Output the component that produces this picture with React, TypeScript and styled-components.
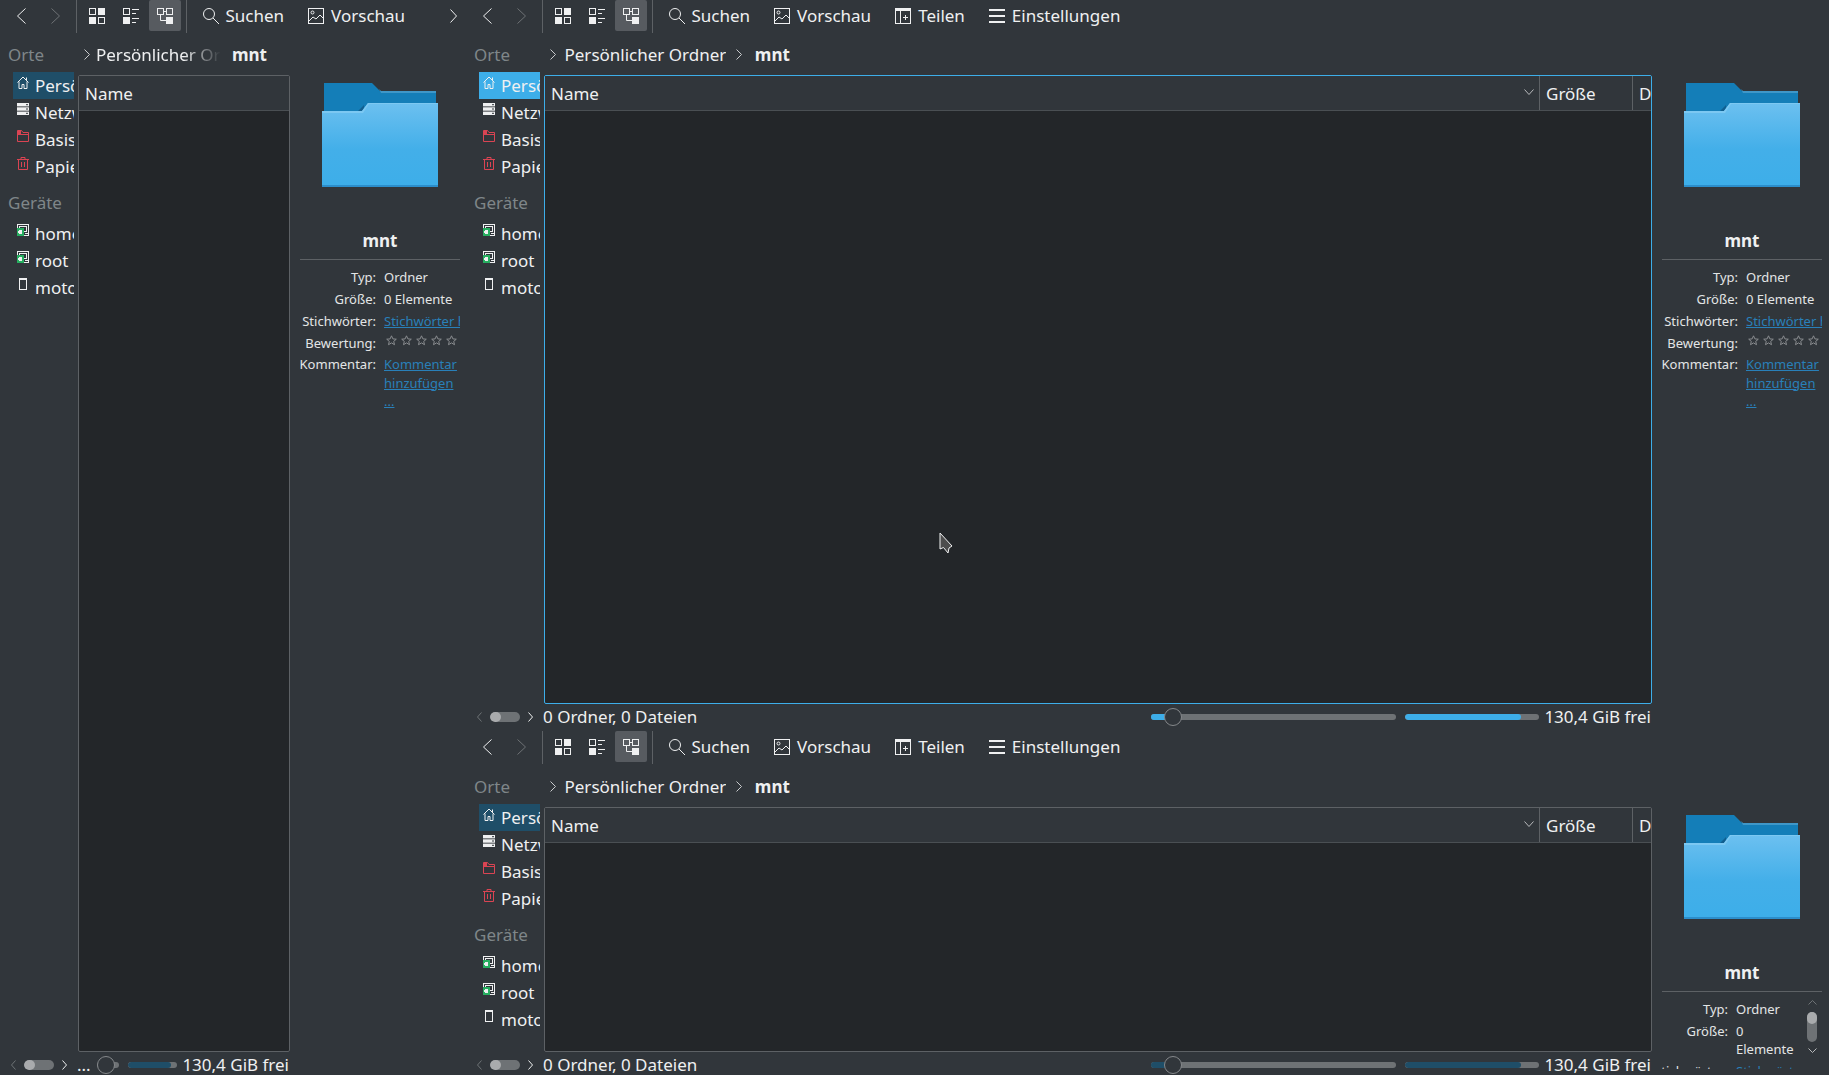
import React from 'react';
import styled, { createGlobalStyle } from 'styled-components';

const GlobalStyle = createGlobalStyle`
    html, body {
        margin: 0;
        padding: 0;
        background: #31363b;
    }
    * {
        box-sizing: border-box;
    }
`;

const Desktop = styled.div`
    width: 1829px;
    height: 1075px;
    display: grid;
    grid-template-columns: 466px 1363px;
    background: #31363b;
    color: #eff0f1;
    font-family: 'Noto Sans', sans-serif;
    font-size: 17px;
    overflow: hidden;
`;

const RightColumn = styled.div`
    display: grid;
    grid-template-rows: 731px 344px;
    min-height: 0;
`;

const PaneBox = styled.div<{ $gapBottom?: number }>`
    display: flex;
    flex-direction: column;
    min-height: 0;
    overflow: hidden;
    padding-bottom: ${p => p.$gapBottom || 0}px;
`;

// toolbar
const Toolbar = styled.div<{ $height: number }>`
    display: flex;
    align-items: flex-start;
    height: ${p => p.$height}px;
    flex: 0 0 ${p => p.$height}px;
    padding-left: 4px;
`;

const NavButton = styled.div`
    width: 34px;
    height: 31px;
    display: flex;
    align-items: center;
    justify-content: center;
    color: #eff0f1;
`;

const OverflowButton = styled(NavButton)`
    margin-left: auto;
    margin-right: -5px;
    width: 24px;
    position: relative;
    left: -6px;
`;

const ToolSeparator = styled.div`
    width: 1px;
    height: 33px;
    background: #5d6165;
    margin: 0 3px 0 4px;
`;

const ViewButton = styled.div<{ $active?: boolean }>`
    width: 32px;
    height: 31px;
    margin: 0 1px;
    display: flex;
    align-items: center;
    justify-content: center;
    border-radius: 2px;
    background: ${p => (p.$active ? '#575b60' : 'transparent')};
`;

const TextButton = styled.div`
    height: 31px;
    display: flex;
    align-items: center;
    gap: 7px;
    padding: 0 11.5px 0 12.5px;
    white-space: nowrap;
`;

// content
const Body = styled.div<{ $info: number }>`
    flex: 1;
    min-height: 0;
    display: grid;
    grid-template-columns: 1fr ${p => p.$info}px;
`;

const Left = styled.div`
    display: flex;
    flex-direction: column;
    min-width: 0;
    min-height: 0;
`;

const Upper = styled.div`
    flex: 1;
    min-height: 0;
    display: grid;
    grid-template-columns: 78px 1fr;
`;

const Places = styled.div`
    margin-top: -1px;
    overflow: hidden;
`;

const SectionLabel = styled.div`
    height: 36px;
    margin-top: 4px;
    padding: 1px 0 0 8px;
    display: flex;
    align-items: center;
    color: #7f8689;
`;

const PlaceRow = styled.div<{ $selected?: boolean; $focus?: boolean }>`
    width: 61px;
    height: 27px;
    margin-left: 13px;
    padding-left: 4px;
    display: flex;
    align-items: flex-start;
    gap: 6px;
    overflow: hidden;
    white-space: nowrap;
    line-height: 28px;
    background: ${p => (p.$selected ? (p.$focus ? '#3daee9' : '#1f4e68') : 'transparent')};

    svg {
        flex: 0 0 12px;
        margin-top: 4px;
    }
`;

const Main = styled.div`
    display: flex;
    flex-direction: column;
    min-width: 0;
    min-height: 0;
`;

const Crumbs = styled.div`
    height: 42px;
    flex: 0 0 42px;
    padding: 0 0 0 3px;
    display: flex;
    align-items: center;
    white-space: nowrap;
`;

const CrumbChevron = styled.span`
    display: flex;
    width: 11px;
    justify-content: center;
    color: #c9cbcd;
`;

const CrumbText = styled.span<{ $clip?: number }>`
    margin: 0 7px 0 ${p => (p.$clip ? '4px' : '6.5px')};
    overflow: hidden;
    ${p =>
        p.$clip
            ? `width: ${p.$clip}px;
               flex: 0 0 ${p.$clip}px;
               -webkit-mask-image: linear-gradient(to right, #000 70%, transparent 100%);
               mask-image: linear-gradient(to right, #000 70%, transparent 100%);`
            : ''}
`;

const CrumbCurrent = styled.span<{ $tight?: boolean }>`
    font-weight: 700;
    margin-left: ${p => (p.$tight ? '4px' : '10.5px')};
`;

const Frame = styled.div<{ $focus?: boolean }>`
    flex: 1;
    min-height: 0;
    display: flex;
    flex-direction: column;
    border: 1px solid ${p => (p.$focus ? '#3daee9' : '#5d6165')};
    border-radius: 2px;
    overflow: hidden;
    background: #232629;
`;

const Header = styled.div`
    height: 35px;
    flex: 0 0 35px;
    display: flex;
    background: #31363b;
    border-bottom: 1px solid #4a4f53;
    white-space: nowrap;
`;

const NameColumn = styled.div`
    flex: 1;
    min-width: 0;
    position: relative;
    display: flex;
    align-items: center;
    padding: 1px 0 0 6px;
`;

const SortMark = styled.span`
    position: absolute;
    right: 5px;
    top: 13px;
    display: flex;
    color: #b8babc;
`;

const Column = styled.div<{ $width: number }>`
    flex: 0 0 ${p => p.$width}px;
    overflow: hidden;
    display: flex;
    align-items: center;
    padding: 1px 0 0 6px;
    border-left: 1px solid #5d6165;
`;

const FrameBody = styled.div`
    flex: 1;
    position: relative;
`;

const Cursor = styled.svg`
    position: absolute;
    left: 394px;
    top: 421px;
`;

// status bar
const Status = styled.div`
    height: 23px;
    flex: 0 0 23px;
    display: flex;
    align-items: center;
    padding: 2px 1px 0 0;
    white-space: nowrap;
`;

const StatusScroll = styled.div`
    width: 77px;
    flex: 0 0 77px;
    padding-left: 11px;
    display: flex;
    align-items: center;
    gap: 8px;
    color: #eff0f1;
`;

const Pill = styled.span`
    width: 30px;
    height: 10px;
    border-radius: 5px;
    background: #6e7275;
    display: block;
    overflow: hidden;

    &::before {
        content: '';
        display: block;
        width: 11px;
        height: 10px;
        border-radius: 5px;
        background: #a9abad;
    }
`;

const StatusText = styled.div`
    flex: 1;
    min-width: 0;
`;

const Slider = styled.div<{ $width: number }>`
    flex: 0 0 ${p => p.$width}px;
    height: 6px;
    margin: 0 9px 0 8px;
    border-radius: 3px;
    background: #6e7275;
    position: relative;
`;

const SliderFill = styled.div<{ $width: number; $focus?: boolean }>`
    width: ${p => p.$width}px;
    height: 6px;
    border-radius: 3px 0 0 3px;
    background: ${p => (p.$focus ? '#3daee9' : '#1f4e68')};
`;

const SliderHandle = styled.div<{ $left: number }>`
    position: absolute;
    left: ${p => p.$left}px;
    top: -6px;
    width: 18px;
    height: 18px;
    border-radius: 50%;
    border: 1px solid #85888b;
    background: #31363b;
`;

const SpaceBar = styled.div<{ $width: number }>`
    flex: 0 0 ${p => p.$width}px;
    height: 6px;
    margin-right: 5px;
    border-radius: 3px;
    background: #6e7275;
    overflow: hidden;
`;

const SpaceFill = styled.div<{ $width: number; $focus?: boolean }>`
    width: ${p => p.$width}px;
    height: 6px;
    border-radius: 3px;
    background: ${p => (p.$focus ? '#3daee9' : '#1f4e68')};
`;

// info panel
const Info = styled.div`
    padding: 50px 6px 6px 10px;
    display: flex;
    flex-direction: column;
    min-height: 0;
    overflow: hidden;
`;

const FolderBox = styled.div`
    display: flex;
    justify-content: center;
    flex: 0 0 104px;
    width: 160px;
`;

const InfoName = styled.div`
    margin-top: 43px;
    width: 160px;
    line-height: 22px;
    text-align: center;
    font-weight: 700;
`;

const InfoRule = styled.div`
    margin-top: 7px;
    width: 160px;
    height: 1px;
    flex: 0 0 1px;
    background: #5d6165;
`;

const InfoLower = styled.div`
    margin-top: 7.5px;
    flex: 1;
    min-height: 0;
    display: flex;
    overflow: hidden;
`;

const InfoGrid = styled.div<{ $narrow?: boolean }>`
    width: ${p => (p.$narrow ? '139px' : '160px')};
    display: grid;
    align-content: start;
    grid-template-columns: ${p => (p.$narrow ? '66px 65px' : '76px 76px')};
    column-gap: 8px;
    row-gap: 3.5px;
    font-size: 13px;
    line-height: 18px;
    overflow: hidden;
`;

const InfoLabel = styled.div`
    display: flex;
    justify-content: flex-end;
    white-space: nowrap;
    color: #e3e5e6;
`;

const InfoValue = styled.div`
    color: #e3e5e6;
    min-width: 0;
    line-height: 18.5px;
`;

const InfoLink = styled.a<{ $single?: boolean }>`
    color: #2980b9;
    text-decoration: underline;
    ${p => (p.$single ? 'display: block; white-space: nowrap; overflow: hidden;' : '')}
`;

const Stars = styled.div`
    display: flex;
    gap: 4px;
    padding: 1px 0 0 2px;
`;

const InfoScroll = styled.div`
    width: 10px;
    margin-left: 6px;
    display: flex;
    flex-direction: column;
    align-items: center;
    color: #b8babc;
`;

const ScrollTrack = styled.div`
    width: 10px;
    height: 30px;
    margin: 7px 0 6px;
    border-radius: 5px;
    background: #6e7275;
    flex: 0 0 30px;

    &::before {
        content: '';
        display: block;
        height: 12px;
        border-radius: 5px;
        background: #a9abad;
    }
`;

// icons
const Chevron = ({ dir, w = 9, h = 16, color = 'currentColor' }: { dir: 'l' | 'r' | 'u' | 'd'; w?: number; h?: number; color?: string }) => {
    const pts = {
        l: `${w - 0.5},0.5 0.5,${h / 2} ${w - 0.5},${h - 0.5}`,
        r: `0.5,0.5 ${w - 0.5},${h / 2} 0.5,${h - 0.5}`,
        u: `0.5,${h - 0.5} ${w / 2},0.5 ${w - 0.5},${h - 0.5}`,
        d: `0.5,0.5 ${w / 2},${h - 0.5} ${w - 0.5},0.5`
    }[dir];
    return (
        <svg width={w} height={h} viewBox={`0 0 ${w} ${h}`} fill="none">
            <polyline points={pts} stroke={color} strokeWidth="1" />
        </svg>
    );
};

const IconGrid = () => (
    <svg width="16" height="16" viewBox="0 0 16 16">
        <rect x="0.5" y="0.5" width="6" height="6" fill="none" stroke="#eff0f1" />
        <rect x="9" y="0" width="7" height="7" fill="#eff0f1" />
        <rect x="0" y="9" width="7" height="7" fill="#eff0f1" />
        <rect x="9.5" y="9.5" width="6" height="6" fill="none" stroke="#eff0f1" />
    </svg>
);

const IconDetails = () => (
    <svg width="16" height="16" viewBox="0 0 16 16">
        <rect x="0.5" y="0.5" width="6" height="6" fill="none" stroke="#eff0f1" />
        <rect x="0" y="9" width="7" height="7" fill="#eff0f1" />
        <path d="M9 1.5h7M9 5.5h4M9 10.5h7M9 14.5h4" stroke="#eff0f1" fill="none" />
    </svg>
);

const IconTree = () => (
    <svg width="16" height="16" viewBox="0 0 16 16">
        <rect x="0.5" y="0.5" width="6" height="6" fill="none" stroke="#eff0f1" />
        <rect x="9.5" y="0.5" width="6" height="6" fill="none" stroke="#eff0f1" />
        <rect x="9" y="9" width="7" height="7" fill="#eff0f1" />
        <path d="M3.5 7v5.5H9M7 3.5h2" stroke="#eff0f1" fill="none" />
    </svg>
);

const IconSearch = () => (
    <svg width="16" height="16" viewBox="0 0 16 16" fill="none" stroke="#eff0f1">
        <circle cx="6" cy="6" r="5.5" />
        <path d="M10 10l6 6" />
    </svg>
);

const IconPreview = () => (
    <svg width="16" height="16" viewBox="0 0 16 16" fill="none" stroke="#eff0f1">
        <rect x="0.5" y="0.5" width="15" height="15" />
        <circle cx="4.5" cy="4.5" r="1.5" />
        <path d="M1 13l4-4 3 2 4-4 3 3" />
    </svg>
);

const IconShare = () => (
    <svg width="16" height="16" viewBox="0 0 16 16" fill="none" stroke="#eff0f1">
        <rect x="0.5" y="0.5" width="15" height="15" />
        <rect x="0" y="0" width="16" height="3" fill="#eff0f1" stroke="none" />
        <path d="M5.5 3v12M8 9.5h5M10.5 7v5" />
    </svg>
);

const IconMenu = () => (
    <svg width="16" height="16" viewBox="0 0 16 16" fill="#eff0f1">
        <rect x="0" y="1" width="16" height="2" />
        <rect x="0" y="7" width="16" height="2" />
        <rect x="0" y="13" width="16" height="2" />
    </svg>
);

const IconHome = () => (
    <svg width="12" height="13" viewBox="0 0 12 13" fill="none" stroke="#eff0f1">
        <path d="M0.5 6.5L6 1l5.5 5.5M2 5.5v7h3v-4h2v4h3v-7M9.5 1.5v2.5" />
    </svg>
);

const IconNetwork = () => (
    <svg width="12" height="12" viewBox="0 0 12 12">
        <rect width="12" height="3.4" fill="#eff0f1" />
        <rect y="4.3" width="12" height="3.4" fill="#eff0f1" />
        <rect y="8.6" width="12" height="3.4" fill="#eff0f1" />
        <path d="M9 1.7h2M9 6h2M9 10.3h2" stroke="#31363b" />
    </svg>
);

const IconRoot = () => (
    <svg width="12" height="12" viewBox="0 0 12 12" fill="none" stroke="#da4453">
        <path d="M0.5 11.5v-11h4l1.5 2h5.5v9zM0.5 4.5h11" />
        <rect x="1" y="1" width="3" height="3" fill="#da4453" stroke="none" />
    </svg>
);

const IconTrash = () => (
    <svg width="12" height="13" viewBox="0 0 12 13" fill="none" stroke="#da4453">
        <path d="M0 2.5h12M4 2.5v-2h4v2M1.5 2.5v10h9v-10M4.5 5v5M7.5 5v5" />
    </svg>
);

const IconDrive = () => (
    <svg width="12" height="13" viewBox="0 0 12 13">
        <rect x="0.5" y="0.5" width="11" height="11" fill="none" stroke="#eff0f1" />
        <rect x="2.5" y="2.5" width="7" height="5" fill="none" stroke="#eff0f1" />
        <path d="M8 9.5h3" stroke="#eff0f1" />
        <rect x="0" y="4" width="7" height="8" fill="#27ae60" />
        <rect x="2" y="6" width="3" height="4" fill="#eff0f1" />
        <rect x="1" y="7" width="1" height="2" fill="#eff0f1" />
    </svg>
);

const IconPhone = () => (
    <svg width="12" height="12" viewBox="0 0 12 12" fill="none" stroke="#eff0f1">
        <rect x="2.5" y="0.5" width="7" height="11" />
        <rect x="2" y="0" width="8" height="2" fill="#eff0f1" stroke="none" />
    </svg>
);

const Star = () => (
    <svg width="11" height="11" viewBox="0 0 11 11" fill="none" stroke="#8a8d90">
        <path d="M5.5 0.8l1.4 3.1 3.4 0.3-2.6 2.2 0.8 3.3-3-1.8-3 1.8 0.8-3.3L0.7 4.2l3.4-0.3z" />
    </svg>
);

const FolderIcon = () => (
    <svg width="116" height="104" viewBox="0 0 116 104">
        <defs>
            <linearGradient id="folderFront" x1="0" y1="0" x2="0" y2="1">
                <stop offset="0" stopColor="#6cc0f0" />
                <stop offset="0.55" stopColor="#43afe9" />
                <stop offset="1" stopColor="#3daee9" />
            </linearGradient>
        </defs>
        <path d="M2 0h48l8 8h56v24H2z" fill="#147eb8" />
        <path d="M57 6l2 2h55v2H59z" fill="#3f97c8" />
        <path d="M2 28h34l6-6v6l-6 4H2z" fill="#105f90" />
        <path d="M0 28h40l6-8h70v84H0z" fill="url(#folderFront)" />
        <path d="M0 28h40l6-8h70v1H47l-6 9H0z" fill="#7cc8f2" />
        <rect x="0" y="102" width="116" height="2" fill="#2c8ecb" />
    </svg>
);

const MouseCursor = () => (
    <Cursor width="14" height="22" viewBox="0 0 14 22">
        <path d="M1 1v16l3.5-1.5L9 21l1-5 3-2z" fill="#4d4d4d" stroke="#eff0f1" strokeWidth="1" />
    </Cursor>
);

const places = [
    { name: 'Persönlicher Ordner', icon: <IconHome />, selected: true },
    { name: 'Netzwerk', icon: <IconNetwork /> },
    { name: 'Basisordner', icon: <IconRoot /> },
    { name: 'Papierkorb', icon: <IconTrash /> }
];

const devices = [
    { name: 'home', icon: <IconDrive /> },
    { name: 'root', icon: <IconDrive /> },
    { name: 'motorola', icon: <IconPhone /> }
];

type PaneProps = {
    focus?: boolean;
    narrow?: boolean;
    compact?: boolean;
    gapBottom?: number;
    cursor?: boolean;
};

function Pane({ focus, narrow, compact, gapBottom, cursor }: PaneProps) {
    return (
        <PaneBox $gapBottom={gapBottom}>
            <Toolbar $height={compact ? 34 : 33}>
                <NavButton><Chevron dir="l" /></NavButton>
                <NavButton><Chevron dir="r" color="#6e7275" /></NavButton>
                <ToolSeparator />
                <ViewButton><IconGrid /></ViewButton>
                <ViewButton><IconDetails /></ViewButton>
                <ViewButton $active><IconTree /></ViewButton>
                <ToolSeparator />
                <TextButton><IconSearch />Suchen</TextButton>
                <TextButton><IconPreview />Vorschau</TextButton>
                {narrow ? (
                    <OverflowButton><Chevron dir="r" w={7} h={14} /></OverflowButton>
                ) : (
                    <>
                        <TextButton><IconShare />Teilen</TextButton>
                        <TextButton><IconMenu />Einstellungen</TextButton>
                    </>
                )}
            </Toolbar>
            <Body $info={narrow ? 176 : 177}>
                <Left>
                    <Upper>
                        <Places>
                            <SectionLabel>Orte</SectionLabel>
                            {places.map(p => (
                                <PlaceRow key={p.name} $selected={p.selected} $focus={focus}>
                                    {p.icon}
                                    {p.name}
                                </PlaceRow>
                            ))}
                            <SectionLabel>Geräte</SectionLabel>
                            {devices.map(d => (
                                <PlaceRow key={d.name}>
                                    {d.icon}
                                    {d.name}
                                </PlaceRow>
                            ))}
                        </Places>
                        <Main>
                            <Crumbs>
                                <CrumbChevron><Chevron dir="r" w={6} h={11} /></CrumbChevron>
                                {narrow ? (
                                    <>
                                        <CrumbText $clip={125}>Persönlicher Ordner</CrumbText>
                                        <CrumbCurrent $tight>mnt</CrumbCurrent>
                                    </>
                                ) : (
                                    <>
                                        <CrumbText>Persönlicher Ordner</CrumbText>
                                        <CrumbChevron><Chevron dir="r" w={6} h={11} /></CrumbChevron>
                                        <CrumbCurrent>mnt</CrumbCurrent>
                                    </>
                                )}
                            </Crumbs>
                            <Frame $focus={focus}>
                                <Header>
                                    <NameColumn>
                                        Name
                                        {!narrow && <SortMark><Chevron dir="d" w={10} h={6} /></SortMark>}
                                    </NameColumn>
                                    {!narrow && <Column $width={93}>Größe</Column>}
                                    {!narrow && <Column $width={19}>D</Column>}
                                </Header>
                                <FrameBody>{cursor && <MouseCursor />}</FrameBody>
                            </Frame>
                        </Main>
                    </Upper>
                    <Status>
                        <StatusScroll>
                            <Chevron dir="l" w={5} h={10} color="#6e7275" />
                            <Pill />
                            <Chevron dir="r" w={5} h={10} />
                        </StatusScroll>
                        <StatusText>{narrow ? '...' : '0 Ordner, 0 Dateien'}</StatusText>
                        <Slider $width={narrow ? 22 : 245}>
                            <SliderFill $width={narrow ? 0 : 19} $focus={focus} />
                            <SliderHandle $left={narrow ? 0 : 13} />
                        </Slider>
                        <SpaceBar $width={narrow ? 49 : 134}>
                            <SpaceFill $width={narrow ? 43 : 116} $focus={focus} />
                        </SpaceBar>
                        130,4 GiB frei
                    </Status>
                </Left>
                <Info>
                    <FolderBox><FolderIcon /></FolderBox>
                    <InfoName>mnt</InfoName>
                    <InfoRule />
                    <InfoLower>
                        <InfoGrid $narrow={compact}>
                            <InfoLabel>Typ:</InfoLabel>
                            <InfoValue>Ordner</InfoValue>
                            <InfoLabel>Größe:</InfoLabel>
                            <InfoValue>0 Elemente</InfoValue>
                            <InfoLabel>Stichwörter:</InfoLabel>
                            <InfoValue><InfoLink $single>Stichwörter hinzufügen</InfoLink></InfoValue>
                            <InfoLabel>Bewertung:</InfoLabel>
                            <InfoValue>
                                <Stars>
                                    {[1, 2, 3, 4, 5].map(n => <Star key={n} />)}
                                </Stars>
                            </InfoValue>
                            <InfoLabel>Kommentar:</InfoLabel>
                            <InfoValue>
                                <InfoLink>Kommentar hinzufügen</InfoLink>
                                <br />
                                <InfoLink>...</InfoLink>
                            </InfoValue>
                        </InfoGrid>
                        {compact && (
                            <InfoScroll>
                                <Chevron dir="u" w={9} h={5} color="#6e7275" />
                                <ScrollTrack />
                                <Chevron dir="d" w={9} h={5} />
                            </InfoScroll>
                        )}
                    </InfoLower>
                </Info>
            </Body>
        </PaneBox>
    );
}

export default function App() {
    return (
        <>
            <GlobalStyle />
            <Desktop>
                <Pane narrow />
                <RightColumn>
                    <Pane focus gapBottom={4} cursor />
                    <Pane compact />
                </RightColumn>
            </Desktop>
        </>
    );
}
